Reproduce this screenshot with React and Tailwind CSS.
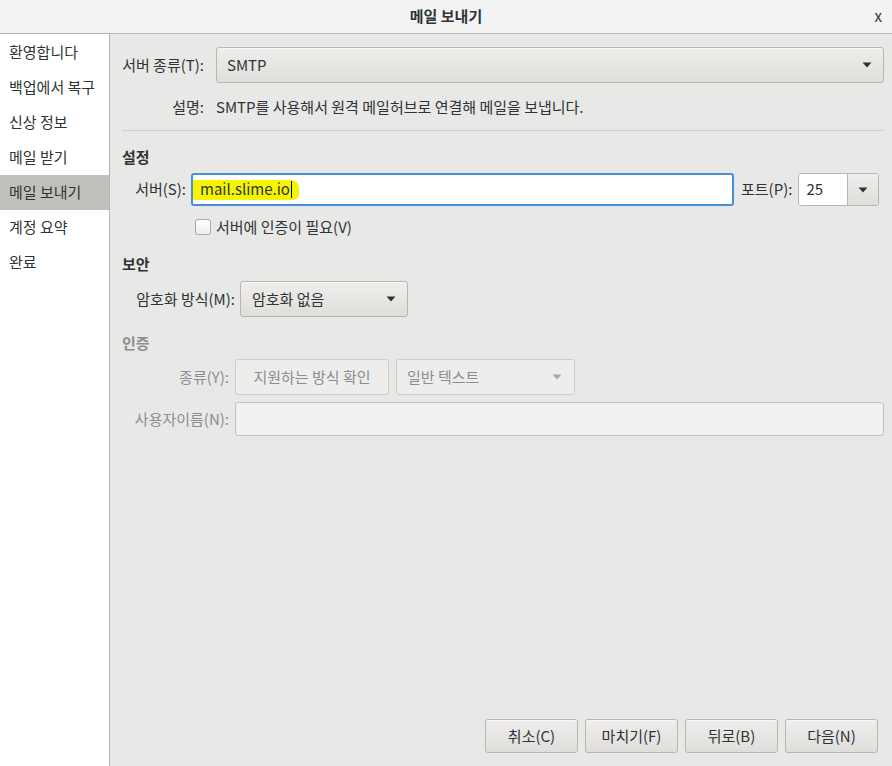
import React from "react";

const font = { fontFamily: '"Noto Sans CJK KR", "Noto Sans", sans-serif' };

function Arrow({ className = "" }) {
  return (
    <svg width="10" height="6" viewBox="0 0 10 6" className={className}>
      <path d="M0.5 0.5 L9.5 0.5 L5 5.5 Z" fill="currentColor" />
    </svg>
  );
}

const btn =
  "border border-[#b6b6b3] rounded-[3px] bg-gradient-to-b from-[#efeeec] to-[#e0dedb] shadow-[0_1px_0_rgba(255,255,255,0.6)_inset]";

export default function App() {
  const sidebar = ["환영합니다", "백업에서 복구", "신상 정보", "메일 받기", "메일 보내기", "계정 요약", "완료"];
  return (
    <div className="w-[892px] h-[766px] flex flex-col bg-[#e8e8e7] text-[#2e3436] text-[15px] overflow-hidden" style={font}>
      {/* Title bar */}
      <div className="h-[34px] shrink-0 flex items-center justify-center relative bg-[#f3f3f3] border-b border-[#b5b5b2]">
        <span className="font-bold text-[15px]">메일 보내기</span>
        <span className="absolute right-[10px] top-[5px] text-[15px]">x</span>
      </div>
      <div className="flex flex-1 min-h-0">
        {/* Sidebar */}
        <div className="w-[110px] shrink-0 bg-white border-r border-[#b5b5b2] pt-px">
          {sidebar.map((s, i) => (
            <div key={s} className={`h-[35px] flex items-center pl-[9px] whitespace-nowrap ${i === 4 ? "bg-[#c0c0bd]" : ""}`}>
              {s}
            </div>
          ))}
        </div>
        {/* Main */}
        <div className="flex-1 flex flex-col pl-[12px] pr-[8px] pt-[13px] pb-[13px]">
          {/* Server type */}
          <div className="flex items-center h-[36px]">
            <div className="w-[82px] text-right whitespace-nowrap">서버 종류(T):</div>
            <div className={`ml-[12px] flex-1 h-[36px] flex items-center justify-between pl-[10px] pr-[11px] ${btn}`}>
              <span>SMTP</span>
              <Arrow />
            </div>
          </div>
          <div className="flex items-center h-[20px] mt-[14px]">
            <div className="w-[82px] text-right">설명:</div>
            <div className="ml-[12px] whitespace-nowrap">SMTP를 사용해서 원격 메일허브로 연결해 메일을 보냅니다.</div>
          </div>
          <div className="h-px bg-[#cfcfcd] mt-[13px]" />

          {/* Settings */}
          <div className="font-bold h-[20px] flex items-center mt-[16px]">설정</div>
          <div className="flex items-center mt-[6px] h-[33px]">
            <div className="w-[64px] text-right whitespace-nowrap">서버(S):</div>
            <div className="ml-[5px] w-[543px] h-[33px] bg-white border-2 border-[#4a90d9] rounded-[3px] flex items-center relative">
              <span className="px-[7px] h-[20px] flex items-center bg-[#f5f500] rounded-[2px] rounded-tr-[8px] rounded-br-[6px]">
                mail.slime.io
                <span className="w-px h-[17px] bg-black ml-px" />
              </span>
            </div>
            <div className="ml-[7px] whitespace-nowrap">포트(P):</div>
            <div className="ml-[6px] w-[81px] h-[33px] flex border border-[#b6b6b3] rounded-[3px] overflow-hidden">
              <div className="w-[48px] bg-white flex items-center pl-[7px]">25</div>
              <div className="flex-1 border-l border-[#b6b6b3] bg-gradient-to-b from-[#efeeec] to-[#e0dedb] flex items-center justify-center">
                <Arrow />
              </div>
            </div>
          </div>
          <div className="flex items-center mt-[11px] h-[20px] pl-[73px]">
            <div className="w-[16px] h-[16px] border border-[#a8a8a5] rounded-[3px] bg-gradient-to-b from-white to-[#eeeeec]" />
            <span className="ml-[5px]">서버에 인증이 필요(V)</span>
          </div>

          {/* Security */}
          <div className="font-bold h-[20px] flex items-center mt-[17px]">보안</div>
          <div className="flex items-center mt-[7px] h-[36px]">
            <div className="w-[113px] text-right whitespace-nowrap">암호화 방식(M):</div>
            <div className={`ml-[5px] w-[168px] h-[36px] flex items-center justify-between pl-[11px] pr-[11px] ${btn}`}>
              <span>암호화 없음</span>
              <Arrow />
            </div>
          </div>

          {/* Auth */}
          <div className="font-bold h-[20px] flex items-center mt-[16px] text-[#8b8e8f]">인증</div>
          <div className="flex items-center mt-[6px] h-[36px] text-[#8b8e8f]">
            <div className="w-[107px] text-right whitespace-nowrap">종류(Y):</div>
            <div className="ml-[6px] w-[154px] h-[36px] flex items-center justify-center border border-[#cdcdca] rounded-[3px] bg-[#ededec] whitespace-nowrap">
              지원하는 방식 확인
            </div>
            <div className="ml-[7px] w-[179px] h-[36px] flex items-center justify-between pl-[10px] pr-[12px] border border-[#cdcdca] rounded-[3px] bg-[#ededec]">
              <span>일반 텍스트</span>
              <Arrow className="text-[#a5a7a8]" />
            </div>
          </div>
          <div className="flex items-center mt-[7px] h-[34px] text-[#8b8e8f]">
            <div className="w-[107px] text-right whitespace-nowrap">사용자이름(N):</div>
            <div className="ml-[6px] flex-1 h-[34px] border border-[#c2c2bf] rounded-[3px] bg-[#f1f1f1]" />
          </div>

          <div className="flex-1" />
          {/* Bottom buttons */}
          <div className="flex justify-end gap-[7px] pr-[6px]">
            {["취소(C)", "마치기(F)", "뒤로(B)", "다음(N)"].map((b) => (
              <div key={b} className={`w-[93px] h-[34px] flex items-center justify-center ${btn}`}>
                {b}
              </div>
            ))}
          </div>
        </div>
      </div>
    </div>
  );
}
